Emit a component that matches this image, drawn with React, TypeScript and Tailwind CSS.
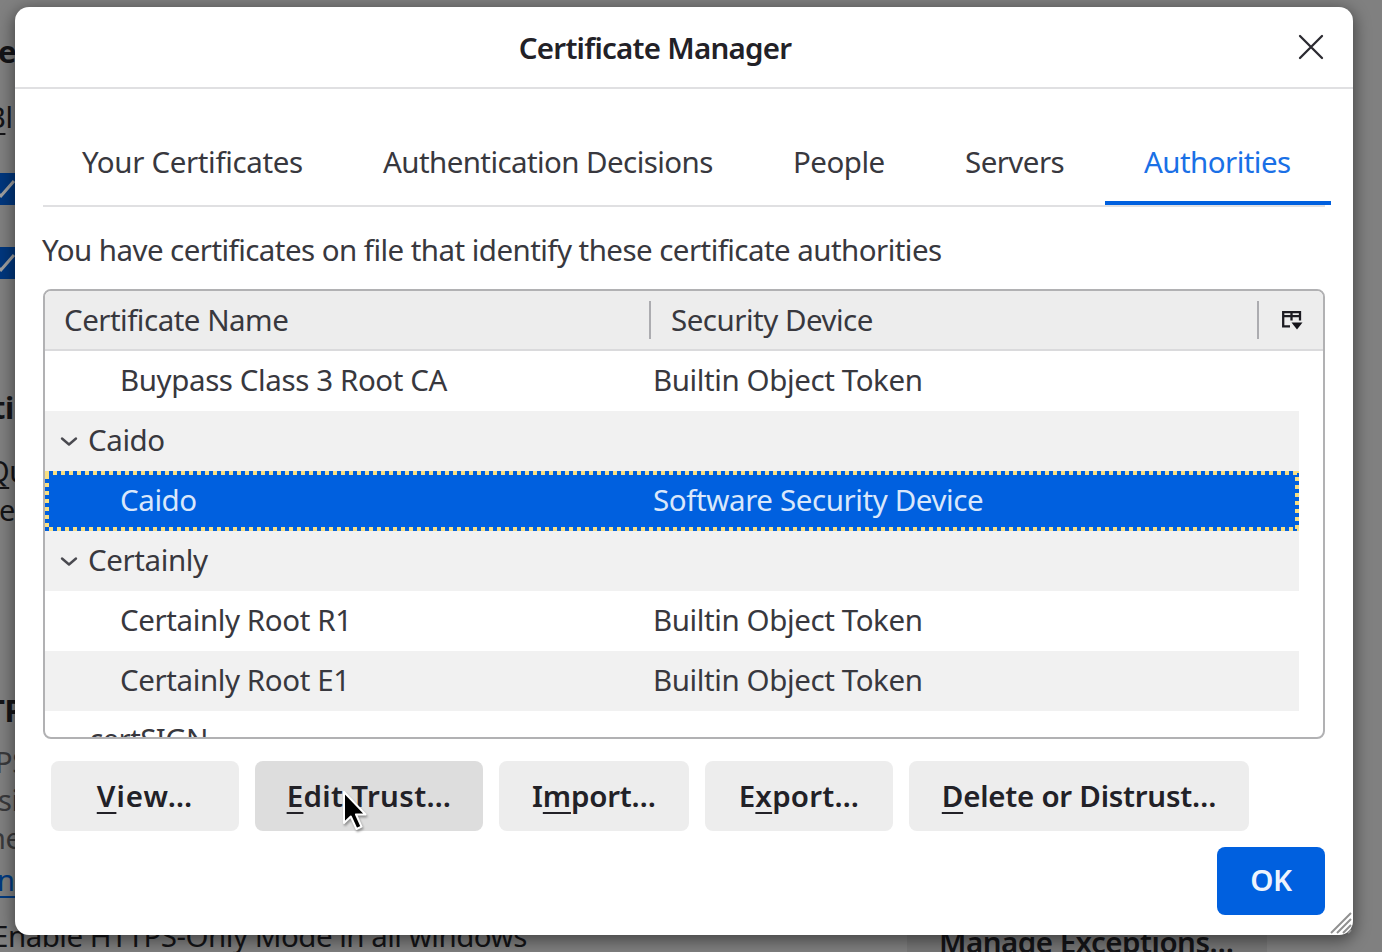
import type { ReactNode } from 'react';

function Mnemonic({ children }: { children: ReactNode }) {
  return <span className="underline decoration-2 underline-offset-[5px] [text-decoration-skip-ink:none]">{children}</span>;
}

function CloseIcon() {
  return (
    <svg width="26" height="26" viewBox="0 0 26 26" fill="none" stroke="#2b2a31" strokeWidth="2.3" strokeLinecap="round">
      <path d="M2 2L24 24M24 2L2 24" />
    </svg>
  );
}

function ColumnPickerIcon() {
  return (
    <svg width="22" height="20" viewBox="0 0 22 20" fill="none" stroke="#1d1c22" strokeWidth="2.3">
      <path d="M9 16.3H2.2V2.2H19V10.5M2 6.2H19M10.5 2V10.5" />
      <path d="M10.5 12.5H21.5L16 19.5Z" fill="#15141a" stroke="none" />
    </svg>
  );
}

function Chevron() {
  return (
    <svg className="relative top-[2px]" width="18" height="12" viewBox="0 0 18 12" fill="none" stroke="#4a4a50" strokeWidth="2.4" strokeLinecap="round" strokeLinejoin="round">
      <path d="M2 2.5L9 8.5L16 2.5" />
    </svg>
  );
}

function Resizer() {
  return (
    <svg className="absolute right-[1px] bottom-[1px]" width="22" height="22" viewBox="0 0 22 22" stroke="#909090" strokeWidth="2">
      <path d="M1 21L21 1M7 21L21 7M13 21L21 13M18 21L21 18" />
    </svg>
  );
}

function Cursor() {
  return (
    <svg className="absolute left-[86px] top-[28px] drop-shadow-[1px_2px_1px_rgba(0,0,0,0.35)]" width="28" height="44" viewBox="0 0 28 44">
      <path d="M3 3V34L9.8 27.5L15.5 40L20.5 37.7L15 25.5H24.5Z" fill="#000" stroke="#fff" strokeWidth="2" strokeLinejoin="round" />
    </svg>
  );
}

const tabs = [
  { label: 'Your Certificates', css: 'w-[301px] pl-[39px] tracking-[-0.35px]' },
  { label: 'Authentication Decisions', css: 'w-[410px] pl-[39px] tracking-[-0.58px]' },
  { label: 'People', css: 'w-[172px] pl-[39px] tracking-[-0.5px]' },
  { label: 'Servers', css: 'w-[179px] pl-[39px] tracking-[-0.55px]' },
];

const buttonBase = 'relative flex h-[70px] items-center justify-center rounded-[8px] pb-[1px] text-[29.5px] font-semibold whitespace-nowrap';

function Row({ name, device, css = 'bg-white', group = false }: { name: string; device?: string; css?: string; group?: boolean }) {
  return (
    <div className={`flex h-[60px] w-[1254px] shrink-0 items-center pb-[3px] ${css}`}>
      {group ? (
        <div className="flex w-[608px] items-center gap-[10px] pl-[15px]">
          <Chevron />
          <span>{name}</span>
        </div>
      ) : (
        <div className="w-[608px] pl-[75px]">{name}</div>
      )}
      <div>{device}</div>
    </div>
  );
}

function Backdrop() {
  return (
    <div className="absolute inset-0 flex justify-between overflow-hidden bg-[#808080] text-[29px] leading-[40px] whitespace-nowrap text-[#141417]">
      <div className="flex flex-col">
        <div className="mt-[31px] -ml-[2px] h-[40px] text-[31px] font-bold">e</div>
        <div className="mt-[26px] -ml-[13px] h-[40px]"><Mnemonic>B</Mnemonic>l</div>
        <div className="mt-[36px] h-[32px] w-[20px] bg-[#00377e]">
          <svg width="20" height="32" viewBox="0 0 20 32" fill="none" stroke="#a0a0a0" strokeWidth="3"><path d="M-4 19L1 23L14 8" /></svg>
        </div>
        <div className="mt-[42px] h-[32px] w-[20px] bg-[#00377e]">
          <svg width="20" height="32" viewBox="0 0 20 32" fill="none" stroke="#a0a0a0" strokeWidth="3"><path d="M-4 19L1 23L14 8" /></svg>
        </div>
        <div className="mt-[108px] -ml-[8px] h-[40px] text-[31px] font-bold">ti</div>
        <div className="mt-[24px] -ml-[13px] h-[40px]"><Mnemonic>Q</Mnemonic>u</div>
        <div className="-mt-[1px] -ml-[11px] h-[40px]">te</div>
        <div className="mt-[160px] -ml-[13px] h-[40px] text-[31px] font-bold">TP</div>
        <div className="mt-[12px] -ml-[5px] h-[38px] text-[#3a3a3c]">PS</div>
        <div className="-ml-[2px] h-[38px] text-[#3a3a3c]">si</div>
        <div className="-ml-[12px] h-[40px] text-[#3a3a3c]">ne</div>
        <div className="mt-[2px] -ml-[3px] h-[40px] text-[#003a80] underline decoration-2 underline-offset-[5px]">n s</div>
        <div className="mt-[16px] -ml-[8px] h-[40px] text-[29.5px] tracking-[-0.5px]">Enable HTTPS-Only Mode in all windows</div>
      </div>
      <div className="mt-[900px] mr-[115px] h-[80px] w-[360px] bg-[#777777] pt-[22px] pl-[32px] text-[29.5px] font-semibold tracking-[-0.5px]">Manage Exceptions…</div>
    </div>
  );
}

export default function App() {
  return (
    <div className="relative h-[952px] w-[1382px] overflow-hidden font-['Noto_Sans',sans-serif] text-[29.5px] leading-[40px] tracking-[-0.4px] text-[#38383e]">
      <Backdrop />
      <div className="absolute top-[7px] left-[15px] flex h-[928px] w-[1338px] flex-col rounded-[14px] bg-white shadow-[0_4px_16px_2px_rgba(0,0,0,0.45)]">
        <div className="relative flex h-[82px] shrink-0 items-center justify-center border-b-2 border-[#e0e0e2] pt-[2px] pr-[58px] text-[29.5px] font-semibold tracking-[-0.75px] text-[#222127]">
          Certificate Manager
          <div className="absolute top-[27px] right-[29px]"><CloseIcon /></div>
        </div>

        <div className="ml-[28px] flex h-[118px] w-[1282px] shrink-0 border-b-2 border-[#e0e0e2] pt-[53px] whitespace-nowrap">
          {tabs.map((t) => (
            <div key={t.label} className={`shrink-0 ${t.css}`}>{t.label}</div>
          ))}
          <div className="h-[63px] w-[226px] shrink-0 border-b-4 border-[#0060df] pl-[39px] tracking-[-0.55px] text-[#1a70e6]">Authorities</div>
        </div>

        <div className="mt-[23px] ml-[27px] h-[40px] tracking-[-0.55px] whitespace-nowrap">You have certificates on file that identify these certificate authorities</div>

        <div className="mt-[19px] ml-[28px] flex h-[450px] w-[1282px] shrink-0 flex-col overflow-hidden rounded-[8px] border-2 border-[#b1b1b3] bg-white">
          <div className="flex h-[60px] shrink-0 items-center border-b-2 border-[#dadadc] bg-[#ededed] tracking-[-0.5px]">
            <div className="w-[604px] pl-[19px]">Certificate Name</div>
            <div className="h-[38px] w-[2px] bg-[#acacb0]" />
            <div className="w-[606px] pl-[20px]">Security Device</div>
            <div className="h-[38px] w-[2px] bg-[#acacb0]" />
            <div className="pl-[22px]"><ColumnPickerIcon /></div>
          </div>
          <Row name="Buypass Class 3 Root CA" device="Builtin Object Token" />
          <Row name="Caido" group css="bg-[#f1f1f1]" />
          <Row
            name="Caido"
            device="Software Security Device"
            css="bg-[#0060df] text-[#d9e7fb] bg-[image:repeating-linear-gradient(90deg,#f8df83_0_4px,transparent_4px_8px),repeating-linear-gradient(90deg,transparent_0_4px,#f8df83_4px_8px),repeating-linear-gradient(180deg,transparent_0_4px,#f8df83_4px_8px),repeating-linear-gradient(180deg,#f8df83_0_2px,transparent_2px_6px,#f8df83_6px_8px)] bg-no-repeat [background-size:100%_4px,100%_4px,4px_100%,4px_100%] [background-position:0_0,0_100%,0_0,100%_0]"
          />
          <Row name="Certainly" group css="bg-[#f1f1f1]" />
          <Row name="Certainly Root R1" device="Builtin Object Token" />
          <Row name="Certainly Root E1" device="Builtin Object Token" css="bg-[#f1f1f1]" />
          <div className="h-[60px] shrink-0 pt-[8px] pl-[44px] tracking-[-0.6px]">certSIGN</div>
        </div>

        <div className="mt-[22px] ml-[36px] flex shrink-0 gap-[16px] text-[#222127]">
          <div className={`${buttonBase} w-[188px] bg-[#ededed] tracking-[1px]`}><Mnemonic>V</Mnemonic>iew…</div>
          <div className={`${buttonBase} w-[228px] bg-[#dddddd] tracking-[0.35px]`}><Mnemonic>E</Mnemonic>dit Trust…<Cursor /></div>
          <div className={`${buttonBase} w-[190px] bg-[#ededed] tracking-[-0.2px]`}>I<Mnemonic>m</Mnemonic>port…</div>
          <div className={`${buttonBase} w-[188px] bg-[#ededed] tracking-[0.25px]`}>E<Mnemonic>x</Mnemonic>port…</div>
          <div className={`${buttonBase} w-[340px] bg-[#ededed] tracking-[-0.25px]`}><Mnemonic>D</Mnemonic>elete or Distrust…</div>
        </div>

        <div className="mt-[16px] mr-[28px] flex h-[68px] w-[108px] shrink-0 items-center justify-center self-end rounded-[8px] bg-[#0060df] pb-[2px] font-semibold text-[#eef4fd]">OK</div>
        <Resizer />
      </div>
    </div>
  );
}
